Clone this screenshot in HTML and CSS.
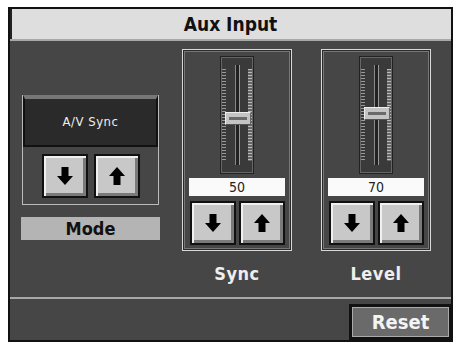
FILE: index.html
```html
<!DOCTYPE html>
<html lang="en">
<head>
    <meta charset="UTF-8">
    <title>Aux Input</title>
    <link rel="stylesheet" href="styles.css">
</head>
<body>
    <div class="screen">
        <div class="title">Aux Input</div>

        <div class="main">
            <div class="mode-group">
                <div class="mode-box">
                    <div class="display">A/V Sync</div>
                    <div class="mode-buttons">
                        <button class="arrow-btn"><svg width="16" height="18" viewBox="0 0 16 18"><path d="M4.5 0h7v9h4.5l-8 9-8-9h4.5z"/></svg></button>
                        <button class="arrow-btn"><svg width="16" height="18" viewBox="0 0 16 18"><path d="M4.5 18h7v-9h4.5l-8-9-8 9h4.5z"/></svg></button>
                    </div>
                </div>
                <div class="mode-label">Mode</div>
            </div>

            <div class="slider-group">
                <div class="slider-box">
                    <div class="slider">
                        <div class="ticks left"></div>
                        <div class="groove"></div>
                        <div class="ticks right"></div>
                        <div class="knob" style="top: 55px"></div>
                    </div>
                    <div class="value">50</div>
                    <div class="slider-buttons">
                        <button class="arrow-btn"><svg width="16" height="18" viewBox="0 0 16 18"><path d="M4.5 0h7v9h4.5l-8 9-8-9h4.5z"/></svg></button>
                        <button class="arrow-btn"><svg width="16" height="18" viewBox="0 0 16 18"><path d="M4.5 18h7v-9h4.5l-8-9-8 9h4.5z"/></svg></button>
                    </div>
                </div>
                <div class="slider-label">Sync</div>
            </div>

            <div class="slider-group level">
                <div class="slider-box">
                    <div class="slider">
                        <div class="ticks left"></div>
                        <div class="groove"></div>
                        <div class="ticks right"></div>
                        <div class="knob" style="top: 50px"></div>
                    </div>
                    <div class="value">70</div>
                    <div class="slider-buttons">
                        <button class="arrow-btn"><svg width="16" height="18" viewBox="0 0 16 18"><path d="M4.5 0h7v9h4.5l-8 9-8-9h4.5z"/></svg></button>
                        <button class="arrow-btn"><svg width="16" height="18" viewBox="0 0 16 18"><path d="M4.5 18h7v-9h4.5l-8-9-8 9h4.5z"/></svg></button>
                    </div>
                </div>
                <div class="slider-label">Level</div>
            </div>
        </div>

        <div class="footer">
            <button class="reset">Reset</button>
        </div>
    </div>
</body>
</html>
```

FILE: styles.css
```css
body {
    margin: 0;
    background-color: #fff;
    font-family: "DejaVu Sans Condensed", "DejaVu Sans", sans-serif;
}
.screen {
    margin: 7px 0 0 8px;
    width: 441px;
    height: 331px;
    border: 2px solid #111;
    background-color: #464646;
    display: flex;
    flex-direction: column;
}
.title {
    height: 30px;
    background-color: #dedede;
    border-bottom: 2px solid #a8a8a8;
    box-shadow: inset 2px 0 0 #222;
    color: #111;
    font-size: 19px;
    font-weight: bold;
    line-height: 31px;
    text-align: center;
}
.main {
    height: 256px;
    display: flex;
    align-items: flex-start;
    padding-left: 11px;
}
.mode-group {
    width: 139px;
    margin-top: 54px;
}
.mode-box {
    margin: 0 1px;
    border: 1px solid #bbb;
    border-top: none;
    height: 109px;
}
.display {
    height: 46px;
    background-color: #2a2a2a;
    border: 2px solid #111;
    border-top: 4px solid #777;
    color: #eee;
    font-size: 13px;
    letter-spacing: 0.5px;
    line-height: 46px;
    text-align: center;
}
.mode-buttons {
    display: flex;
    gap: 6px;
    padding: 7px 0 0 19px;
}
.mode-label {
    margin-top: 12px;
    height: 23px;
    background-color: #b4b4b4;
    color: #111;
    font-size: 18px;
    font-weight: bold;
    line-height: 24px;
    text-align: center;
}
.arrow-btn {
    width: 46px;
    height: 44px;
    padding: 0;
    border: 2px solid #111;
    background-color: #c8c8c8;
    box-shadow: inset 2px 2px 0 #f0f0f0, inset -3px -3px 0 #7a7a7a;
    display: flex;
    align-items: center;
    justify-content: center;
}
.arrow-btn svg {
    fill: #000;
}
.slider-group {
    margin-left: 22px;
    margin-top: 8px;
    width: 110px;
}
.slider-group.level {
    margin-left: 29px;
}
.slider-box {
    height: 202px;
    border: 1px solid #d8d8d8;
    box-shadow: inset 0 0 0 1px #2a2a2a, inset 0 0 0 2px #777;
    display: flex;
    flex-direction: column;
    align-items: center;
    padding-top: 6px;
    box-sizing: border-box;
}
.slider {
    position: relative;
    width: 34px;
    height: 118px;
    background-color: #3a3a3a;
    border: 1px solid #222;
    box-shadow: inset 0 0 0 1px #666;
    display: flex;
    justify-content: space-between;
    box-sizing: border-box;
}
.ticks {
    width: 4px;
    margin: 12px 0;
    background: repeating-linear-gradient(to bottom, #999 0 1px, transparent 1px 3px);
}
.ticks.left {
    margin-left: 1px;
}
.ticks.right {
    margin-right: 1px;
    background: repeating-linear-gradient(to bottom, #bbb 0 1px, #666 1px 3px);
}
.groove {
    width: 3px;
    margin: 8px 0;
    background-color: #222;
    border-left: 1px solid #888;
    border-right: 1px solid #999;
}
.knob {
    position: absolute;
    left: 4px;
    width: 24px;
    height: 11px;
    background-color: #c4c4c4;
    border: 1px solid #eee;
    border-bottom-color: #555;
    border-right-color: #666;
    box-shadow: inset 0 4px 0 #c4c4c4, inset 0 -4px 0 #c4c4c4, inset 3px 0 0 #c4c4c4, inset -3px 0 0 #c4c4c4, inset 0 0 0 10px #6a6a6a;
}
.value {
    margin-top: 4px;
    width: 96px;
    height: 18px;
    background-color: #fafafa;
    color: #222;
    font-size: 14px;
    line-height: 19px;
    text-align: center;
}
.slider-buttons {
    display: flex;
    gap: 3px;
    margin-top: 5px;
}
.slider-label {
    margin-top: 12px;
    color: #eee;
    font-size: 18px;
    font-weight: bold;
    letter-spacing: 0.5px;
    text-align: center;
}
.footer {
    flex: 1;
    border-top: 2px solid #a8a8a8;
    display: flex;
    justify-content: flex-end;
    align-items: flex-end;
}
.reset {
    width: 103px;
    height: 36px;
    margin-right: -1px;
    border: 3px solid #111;
    box-shadow: inset 0 0 0 1px #aaa;
    background-color: #6a6a6a;
    color: #f4f4f4;
    font-family: "DejaVu Sans Condensed", "DejaVu Sans", sans-serif;
    font-size: 20px;
    font-weight: bold;
    padding: 0;
}
```
